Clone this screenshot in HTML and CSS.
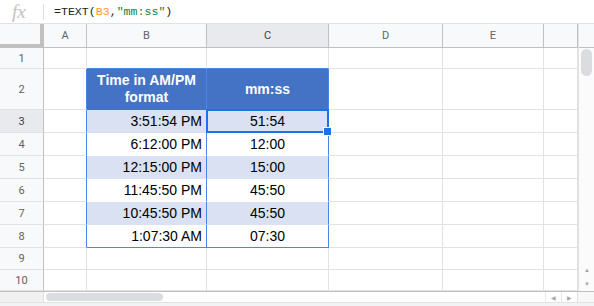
FILE: index.html
```html
<!DOCTYPE html>
<html lang="en">

<head>
	<meta charset="UTF-8">
	<title>TEXT mm:ss</title>
	<link rel="stylesheet" href="styles.css">
</head>

<body>
	<!-- 公式栏 -->
	<div class="formula-bar">
		<span class="fx">fx</span>
		<span class="formula">=TEXT(<span class="ref">B3</span>,<span class="str">"mm:ss"</span>)</span>
	</div>

	<div class="sheet">
		<div class="grid">
			<!-- 列标题 -->
			<div class="corner"></div>
			<div class="col-head">A</div>
			<div class="col-head">B</div>
			<div class="col-head selected">C</div>
			<div class="col-head">D</div>
			<div class="col-head">E</div>
			<div class="col-head"></div>

			<!-- 1 -->
			<div class="row-head">1</div>
			<div class="cell"></div>
			<div class="cell above"></div>
			<div class="cell above"></div>
			<div class="cell"></div>
			<div class="cell"></div>
			<div class="cell"></div>

			<!-- 2 -->
			<div class="row-head">2</div>
			<div class="cell edge"></div>
			<div class="cell th">Time in AM/PM<br>format</div>
			<div class="cell th">mm:ss</div>
			<div class="cell"></div>
			<div class="cell"></div>
			<div class="cell"></div>

			<!-- 3 -->
			<div class="row-head selected">3</div>
			<div class="cell edge"></div>
			<div class="cell td band right">3:51:54 PM</div>
			<div class="cell td band active">51:54</div>
			<div class="cell"></div>
			<div class="cell"></div>
			<div class="cell"></div>

			<!-- 4 -->
			<div class="row-head">4</div>
			<div class="cell edge"></div>
			<div class="cell td right">6:12:00 PM</div>
			<div class="cell td">12:00</div>
			<div class="cell"></div>
			<div class="cell"></div>
			<div class="cell"></div>

			<!-- 5 -->
			<div class="row-head">5</div>
			<div class="cell edge"></div>
			<div class="cell td band right">12:15:00 PM</div>
			<div class="cell td band">15:00</div>
			<div class="cell"></div>
			<div class="cell"></div>
			<div class="cell"></div>

			<!-- 6 -->
			<div class="row-head">6</div>
			<div class="cell edge"></div>
			<div class="cell td right">11:45:50 PM</div>
			<div class="cell td">45:50</div>
			<div class="cell"></div>
			<div class="cell"></div>
			<div class="cell"></div>

			<!-- 7 -->
			<div class="row-head">7</div>
			<div class="cell edge"></div>
			<div class="cell td band right">10:45:50 PM</div>
			<div class="cell td band">45:50</div>
			<div class="cell"></div>
			<div class="cell"></div>
			<div class="cell"></div>

			<!-- 8 -->
			<div class="row-head">8</div>
			<div class="cell edge"></div>
			<div class="cell td last right">1:07:30 AM</div>
			<div class="cell td last">07:30</div>
			<div class="cell"></div>
			<div class="cell"></div>
			<div class="cell"></div>

			<!-- 9 -->
			<div class="row-head">9</div>
			<div class="cell"></div>
			<div class="cell"></div>
			<div class="cell"></div>
			<div class="cell"></div>
			<div class="cell"></div>
			<div class="cell"></div>

			<!-- 10 -->
			<div class="row-head">10</div>
			<div class="cell"></div>
			<div class="cell"></div>
			<div class="cell"></div>
			<div class="cell"></div>
			<div class="cell"></div>
			<div class="cell"></div>
		</div>

		<!-- 竖向滚动条 -->
		<div class="vscroll">
			<div class="vscroll-head"></div>
			<div class="vtrack">
				<div class="vthumb"></div>
			</div>
			<div class="arrow">&#9650;</div>
			<div class="arrow">&#9660;</div>
		</div>
	</div>

	<!-- 横向滚动条 -->
	<div class="hscroll">
		<div class="hscroll-left"></div>
		<div class="htrack">
			<div class="hthumb"></div>
		</div>
		<div class="arrow">&#9664;</div>
		<div class="arrow">&#9654;</div>
		<div class="hscroll-corner"></div>
	</div>
	<div class="tabs"></div>
</body>

</html>
```

FILE: styles.css
```css
* {
	box-sizing: border-box;
}

body {
	margin: 0;
	padding: 0;
	width: 594px;
	height: 306px;
	overflow: hidden;
	background: #fff;
	font-family: "Liberation Sans", Arial, sans-serif;
}

/* 公式栏 */
.formula-bar {
	height: 24px;
	display: flex;
	align-items: center;
	border-bottom: 1px solid #e1e1e1;
}

.fx {
	width: 44px;
	padding-left: 12px;
	font-family: "Liberation Serif", serif;
	font-style: italic;
	font-size: 19px;
	color: #c2c2c2;
	border-right: 1px solid #e0e0e0;
	line-height: 16px;
	height: 16px;
}

.formula {
	padding-left: 10px;
	font-family: "Liberation Mono", monospace;
	font-size: 11.6px;
	color: #222;
}

.ref {
	color: #f7981d;
}

.str {
	color: #0b8043;
}

/* 表格区域 */
.sheet {
	display: flex;
}

.grid {
	width: 578px;
	display: grid;
	grid-template-columns: 44px 43px 120px 122px 114px 101px 34px;
	grid-template-rows: 24px 21px 41px repeat(6, 23px) 22px 21px;
}

.corner {
	background: #f8f9fa;
	border-right: 4px solid #c0c0c0;
	border-bottom: 4px solid #c0c0c0;
}

.col-head,
.row-head {
	display: flex;
	align-items: center;
	justify-content: center;
	background: #f8f9fa;
	font-family: Roboto, sans-serif;
	font-size: 11px;
	color: #5f6368;
}

.col-head {
	border-right: 1px solid #c0c0c0;
	border-bottom: 1px solid #c0c0c0;
}

.row-head {
	border-right: 1px solid #c0c0c0;
	border-bottom: 1px solid #e2e2e2;
}

.col-head.selected,
.row-head.selected {
	background: #e8eaed;
	color: #3c4043;
}

.cell {
	display: flex;
	align-items: center;
	justify-content: center;
	border-right: 1px solid #e2e2e2;
	border-bottom: 1px solid #e2e2e2;
	font-size: 14px;
	color: #000;
}

.cell.above {
	border-bottom-color: #4a86e8;
}

.cell.edge {
	border-right-color: #4a86e8;
}

.cell.th {
	background: #4472c4;
	color: #fff;
	font-weight: bold;
	text-align: center;
	line-height: 17px;
	border-right-color: #4a86e8;
	border-bottom-color: #4472c4;
}

.cell.td {
	border-right-color: #4a86e8;
	border-bottom-color: #fff;
}

.cell.band {
	background: #d9e1f2;
	border-bottom-color: #d9e1f2;
}

.cell.last {
	border-bottom-color: #4a86e8;
}

.cell.right {
	justify-content: flex-end;
	padding-right: 4px;
}

/* 当前选中单元格 */
.cell.active {
	position: relative;
}

.cell.active::after {
	content: "";
	position: absolute;
	top: -1px;
	left: -1px;
	right: -1px;
	bottom: -1px;
	border: 2px solid #1a73e8;
}

.cell.active::before {
	content: "";
	position: absolute;
	right: -4px;
	bottom: -4px;
	width: 7px;
	height: 7px;
	background: #1a73e8;
	border: 1px solid #fff;
	z-index: 1;
}

/* 滚动条 */
.vscroll {
	width: 16px;
	display: flex;
	flex-direction: column;
	background: #fbfbfb;
	border-left: 1px solid #e2e2e2;
}

.vscroll-head {
	height: 24px;
	background: #f8f9fa;
	border-bottom: 1px solid #c0c0c0;
}

.vtrack {
	flex: 1;
	padding: 1px 2px;
}

.vthumb {
	width: 11px;
	height: 27px;
	border-radius: 6px;
	background: #dadce0;
}

.arrow {
	display: flex;
	align-items: center;
	justify-content: center;
	font-size: 6px;
	color: #a8a8a8;
	height: 14px;
	width: 16px;
}

.hscroll {
	height: 11px;
	display: flex;
	border-top: 1px solid #c0c0c0;
	background: #fff;
}

.hscroll-left {
	width: 44px;
	background: #f1f1f1;
	border-right: 1px solid #e2e2e2;
}

.htrack {
	width: 501px;
	padding: 1px 2px;
}

.hthumb {
	width: 117px;
	height: 8px;
	border-radius: 4px;
	background: #dadce0;
}

.hscroll .arrow {
	height: 10px;
	border-left: 1px solid #e8e8e8;
}

.hscroll-corner {
	flex: 1;
	background: #f8f8f8;
	border-left: 1px solid #e2e2e2;
}

.tabs {
	height: 4px;
	background: #f1f3f4;
	border-top: 1px solid #e2e2e2;
}
```
